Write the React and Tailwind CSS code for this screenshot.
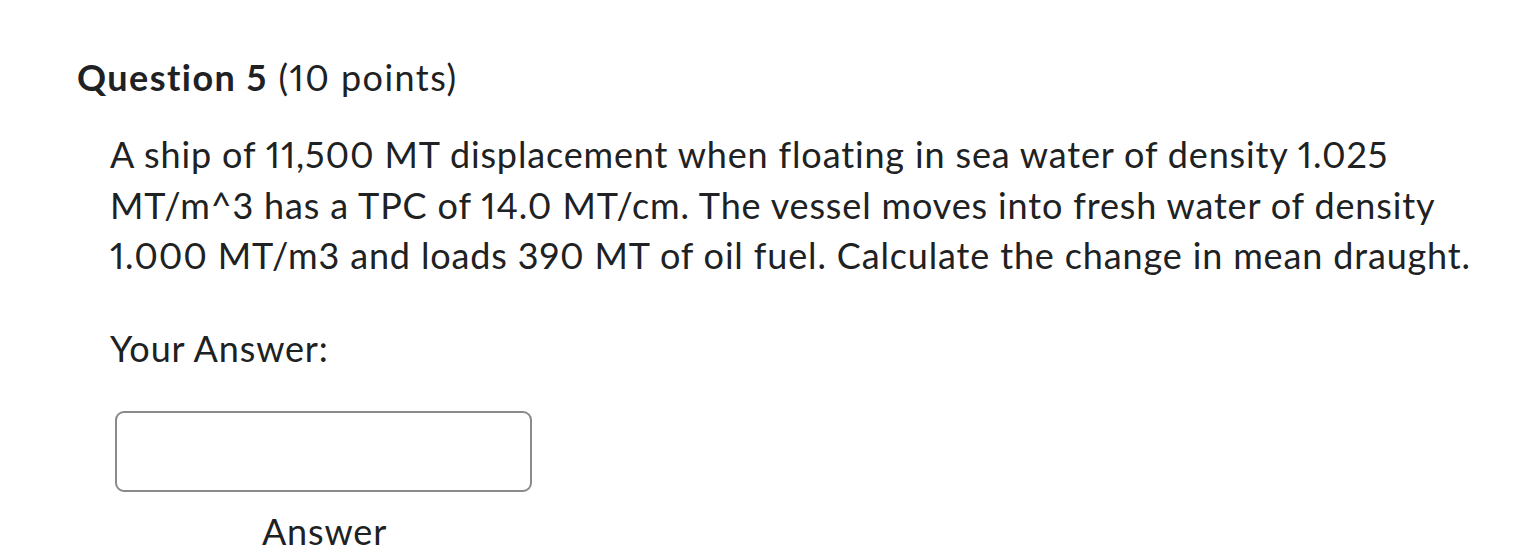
export default function App() {
  return (
    <div className="w-[1515px] h-[557px] bg-white overflow-hidden text-[#202122] [font-variant-ligatures:none] proportional-nums" style={{ fontFamily: 'Lato, "Noto Sans", sans-serif' }}>
      <div className="pl-[77px] pt-[55px]">
        <h2 className="text-[36px] leading-[44px] tracking-[1.45px]">
          <span className="font-bold">Question 5</span> <span>(10 points)</span>
        </h2>
      </div>
      <div className="pl-[110px] pr-[20px] mt-[30px]">
        <p className="text-[36px] leading-[50.5px] tracking-[0.85px] max-w-[1385px]">
          A ship of 11,500 MT displacement when floating in sea water of density 1.025 MT/m^3 has a TPC of 14.0 MT/cm. The vessel moves into fresh water of density 1.000 MT/m3 and loads 390 MT of oil fuel. Calculate the change in mean draught.
        </p>
        <p className="text-[36px] leading-[50px] tracking-[0.85px] mt-[42px]">Your Answer:</p>
        <div className="mt-[38px] ml-[5px] w-[417px] h-[81px] rounded-[9px] border-2 border-[#8a8a8a]" />
        <div className="w-[429px] text-center text-[36px] leading-[50px] tracking-[0.85px] mt-[14px]">Answer</div>
      </div>
    </div>
  );
}
